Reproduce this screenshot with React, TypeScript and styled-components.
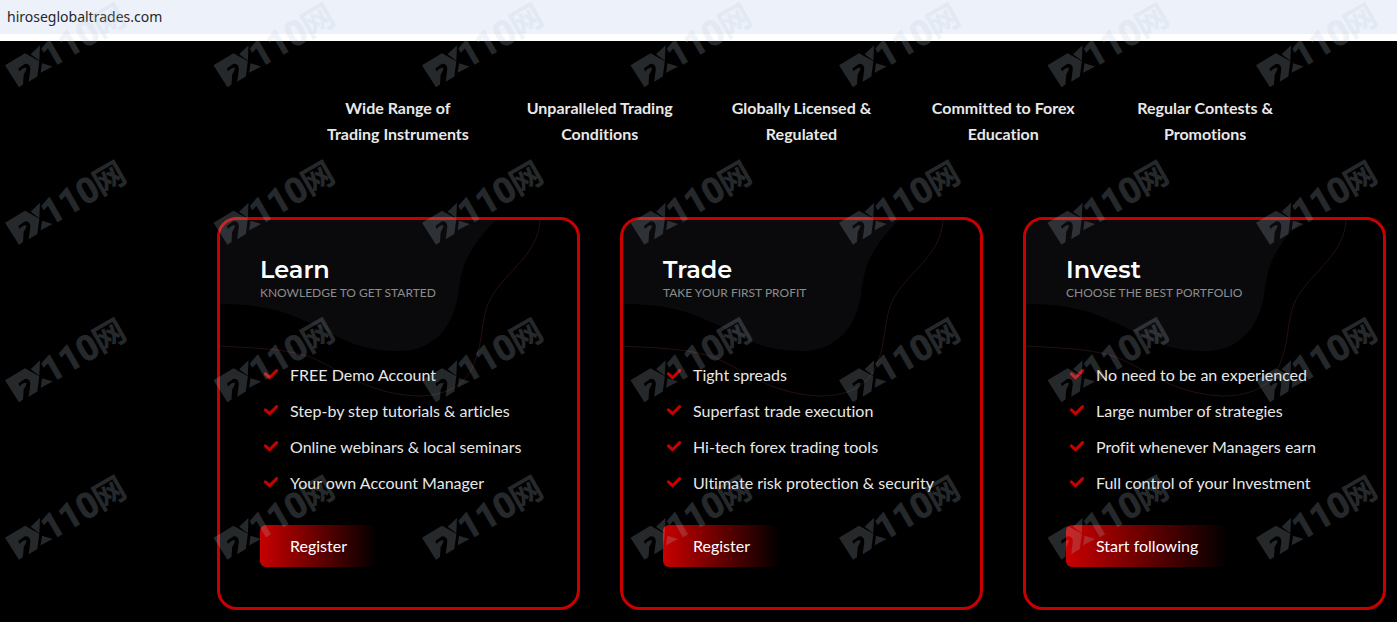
import React from "react";
import styled, { createGlobalStyle } from "styled-components";

const GlobalStyle = createGlobalStyle`
  *, *::before, *::after { box-sizing: border-box; }
  body {
    margin: 0;
    background: #000;
    color: #fff;
    font-family: Lato, "Liberation Sans", sans-serif;
    font-size: 16px;
    font-variant-ligatures: none;
  }
`;

const Page = styled.div`
  position: relative;
  min-height: 100vh;
  overflow: hidden;
`;

const AddressBar = styled.header`
  height: 41px;
  background: #edf1fa;
  border-bottom: 7px solid #fff;
  padding: 0 7px;
  font-family: "Noto Sans", "Open Sans", sans-serif;
  font-size: 14px;
  line-height: 34px;
  color: #25272b;
`;

const Main = styled.main`
  padding: 54px 11px 13px 217px;
`;

const Features = styled.ul`
  display: grid;
  grid-template-columns: repeat(5, 1fr);
  list-style: none;
  margin: 0 0 70px;
  padding: 0 80px;
`;

const Feature = styled.li`
  padding: 0 20px;
  font-weight: 700;
  line-height: 26px;
  color: #e8e8e8;
  text-align: center;
  white-space: pre-line;
`;

const Cards = styled.div`
  display: grid;
  grid-template-columns: repeat(3, 1fr);
  gap: 40px;
`;

const Card = styled.article`
  position: relative;
  border: 3px solid #c80000;
  border-radius: 20px;
  overflow: hidden;
  padding: 40px 20px 40px 40px;
`;

const Backdrop = styled.svg`
  position: absolute;
  top: 0;
  left: 0;
`;

const CardBody = styled.div`
  position: relative;
`;

const Title = styled.h2`
  margin: 0;
  font-family: Montserrat, Inter, sans-serif;
  font-size: 24px;
  font-weight: 600;
  line-height: 20px;
`;

const Subtitle = styled.p`
  margin: 0 0 51px;
  font-size: 12px;
  line-height: 26px;
  text-transform: uppercase;
  color: #8c8c8c;
`;

const Benefits = styled.ul`
  list-style: none;
  margin: 0 0 24px;
  padding: 0;
`;

const Benefit = styled.li`
  display: flex;
  align-items: center;
  gap: 11px;
  padding-left: 3px;
  line-height: 36px;
  color: #e8e8e8;
  white-space: nowrap;
`;

const ActionButton = styled.button`
  display: block;
  height: 42px;
  padding: 0 30px 2px;
  border: 0;
  border-radius: 6px;
  background: linear-gradient(90deg, #c80000, #000);
  color: #fff;
  font: inherit;
  cursor: pointer;
`;

const WatermarkLayer = styled.svg`
  position: absolute;
  inset: 0;
  width: 100%;
  height: 100%;
  pointer-events: none;
`;

const CheckIcon = () => (
  <svg width="16" height="16" viewBox="0 0 16 16" fill="none" stroke="#c80000" strokeWidth="3" aria-hidden="true">
    <path d="M2.4 6.8 6.5 10.7 13.6 3.6" strokeLinecap="round" strokeLinejoin="miter" />
  </svg>
);

const Waves = () => (
  <Backdrop width="340" height="190" viewBox="0 0 340 190" aria-hidden="true">
    <path
      d="M0 0H276C252 24 242 42 239 68C235 106 214 131 180 131C133 131 118 115 90 103C62 90 40 84 0 84Z"
      fill="#0a0a0d"
    />
    <path
      d="M320 0C318 38 281 53 268 84C261 102 263 121 255 141C248 163 229 176 197 176C143 174 115 145 87 136C60 128 30 128 0 126"
      fill="none"
      stroke="#241010"
    />
  </Backdrop>
);

const MARK_COLUMNS = 7;
const MARK_ROWS = 4;
const MARK_STEP_X = 208.5;
const MARK_STEP_Y = 157.5;

const Mark = ({ x, y }: { x: number; y: number }) => (
  <g transform={`translate(${x} ${y})`} opacity=".2">
    <g transform="scale(.3333)">
      <path d="M0 194 60 158 103 182 97 228 71 244 76 206Q76 190 60 190L40 204 44 213Q54 200 64 202 66 206 56 222L54 252 42 260Z" />
      <path d="M77 161 105 134 103 181Z" />
      <path d="M111 188 143 198 107 217Z" />
    </g>
    <text
      transform="translate(45 68) rotate(-30)"
      fontFamily="Roboto, sans-serif"
      fontWeight="700"
      fontSize="35"
      stroke="#becdd7"
      strokeWidth=".8"
    >
      110
    </text>
    <text
      transform="translate(96 38) rotate(-30)"
      fontFamily='"Noto Sans CJK SC", sans-serif'
      fontWeight="700"
      fontSize="32"
    >
      网
    </text>
  </g>
);

const Watermark = () => (
  <WatermarkLayer fill="#becdd7" aria-hidden="true">
    {Array.from({ length: MARK_COLUMNS * MARK_ROWS }, (_, i) => (
      <Mark
        key={i}
        x={5 + (i % MARK_COLUMNS) * MARK_STEP_X}
        y={0.5 + Math.floor(i / MARK_COLUMNS) * MARK_STEP_Y}
      />
    ))}
  </WatermarkLayer>
);

const features = [
  "Wide Range of\nTrading Instruments",
  "Unparalleled Trading\nConditions",
  "Globally Licensed &\nRegulated",
  "Committed to Forex\nEducation",
  "Regular Contests &\nPromotions",
];

const plans = [
  {
    title: "Learn",
    subtitle: "Knowledge to get started",
    benefits: [
      "FREE Demo Account",
      "Step-by step tutorials & articles",
      "Online webinars & local seminars",
      "Your own Account Manager",
    ],
    action: "Register",
  },
  {
    title: "Trade",
    subtitle: "Take your first profit",
    benefits: [
      "Tight spreads",
      "Superfast trade execution",
      "Hi-tech forex trading tools",
      "Ultimate risk protection & security",
    ],
    action: "Register",
  },
  {
    title: "Invest",
    subtitle: "Choose the best portfolio",
    benefits: [
      "No need to be an experienced",
      "Large number of strategies",
      "Profit whenever Managers earn",
      "Full control of your Investment",
    ],
    action: "Start following",
  },
];

export default function App() {
  return (
    <>
      <GlobalStyle />
      <Page>
        <AddressBar>hiroseglobaltrades.com</AddressBar>
        <Main>
          <Features>
            {features.map((text) => (
              <Feature key={text}>{text}</Feature>
            ))}
          </Features>
          <Cards>
            {plans.map((plan) => (
              <Card key={plan.title}>
                <Waves />
                <CardBody>
                  <Title>{plan.title}</Title>
                  <Subtitle>{plan.subtitle}</Subtitle>
                  <Benefits>
                    {plan.benefits.map((benefit) => (
                      <Benefit key={benefit}>
                        <CheckIcon />
                        {benefit}
                      </Benefit>
                    ))}
                  </Benefits>
                  <ActionButton type="button">{plan.action}</ActionButton>
                </CardBody>
              </Card>
            ))}
          </Cards>
        </Main>
        <Watermark />
      </Page>
    </>
  );
}
